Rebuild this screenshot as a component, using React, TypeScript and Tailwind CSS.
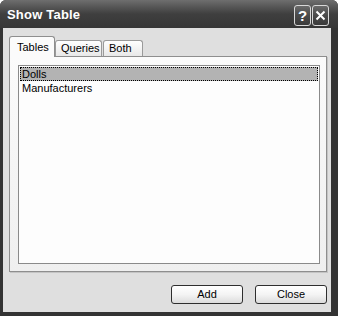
// Access-style "Show Table" dialog, XP look in grayscale.

const tabs = ['Tables', 'Queries', 'Both'];
const items = ['Dolls', 'Manufacturers'];

function TitleButton({ children }: { children: React.ReactNode }) {
  return (
    <div className="w-[17px] h-[21px] rounded-[3px] border border-[#d8d8d8] bg-gradient-to-b from-[#6a6a6a] via-[#4a4a4a] to-[#3a3a3a] flex items-center justify-center text-white">
      {children}
    </div>
  );
}

export default function App() {
  return (
    <div
      className="w-[338px] h-[316px] flex flex-col bg-[#333333] rounded-t-[6px] overflow-hidden"
      style={{ fontFamily: '"Liberation Sans", Arial, sans-serif' }}
    >
      <div className="h-[28px] shrink-0 flex items-center justify-between pl-[7px] pr-[9px] bg-gradient-to-b from-[#6e6e6e] via-[#3f3f3f] to-[#363636]">
        <span className="text-white font-bold text-[13px] tracking-[0.2px] mt-[2px]">Show Table</span>
        <div className="flex gap-[1px] mt-[2px]">
          <TitleButton>
            <span className="text-[15px] font-bold leading-none">?</span>
          </TitleButton>
          <TitleButton>
            <svg width="11" height="11" viewBox="0 0 11 11">
              <path d="M1.5 1.5 L9.5 9.5 M9.5 1.5 L1.5 9.5" stroke="white" strokeWidth="2" />
            </svg>
          </TitleButton>
        </div>
      </div>

      <div className="flex-1 ml-[3px] mr-[7px] mb-[4px] bg-[#dfdfdf] flex flex-col pl-[6px] pr-[4px] pt-[8px] text-[11px] text-black">
        <div className="flex items-end h-[20px]">
          {tabs.map((t, i) =>
            i === 0 ? (
              <div
                key={t}
                className="h-[21px] -mb-[1px] relative z-10 w-[46px] border border-b-0 border-[#8e8e8e] rounded-t-[3px] bg-[#fbfbfb] flex items-center pl-[7px]"
              >
                Tables
              </div>
            ) : (
              <div
                key={t}
                className={`h-[16px] border border-b-0 border-[#9a9a9a] rounded-t-[3px] bg-gradient-to-b from-[#ffffff] to-[#e8e8e8] flex items-center pl-[5px] ${
                  i === 1 ? 'w-[47px]' : 'w-[40px] ml-[1px]'
                }`}
              >
                {t}
              </div>
            )
          )}
        </div>
        <div className="h-[216px] border border-[#8e8e8e] bg-gradient-to-b from-[#fbfbfb] to-[#efefef] pl-[8px] pr-[6px] pt-[8px] pb-[7px] flex shadow-[1px_1px_0_#c4c4c4]">
          <div className="flex-1 border border-[#8a8a8a] bg-[#fdfdfd] pt-[1px] px-[1px]">
            {items.map((it, i) => (
              <div
                key={it}
                className={`h-[14px] leading-[14px] pl-[2px] ${
                  i === 0 ? 'bg-[#b3b3b3] outline outline-1 outline-dotted outline-black -outline-offset-1' : ''
                }`}
              >
                {it}
              </div>
            ))}
          </div>
        </div>
        <div className="flex justify-end gap-[12px] mt-[13px]">
          {['Add', 'Close'].map(b => (
            <button
              key={b}
              className="w-[72px] h-[19px] rounded-[3px] border border-[#2e2e2e] bg-gradient-to-b from-[#ffffff] via-[#f4f4f4] to-[#dcdcdc] text-[11px] leading-none"
            >
              {b}
            </button>
          ))}
        </div>
      </div>
    </div>
  );
}
